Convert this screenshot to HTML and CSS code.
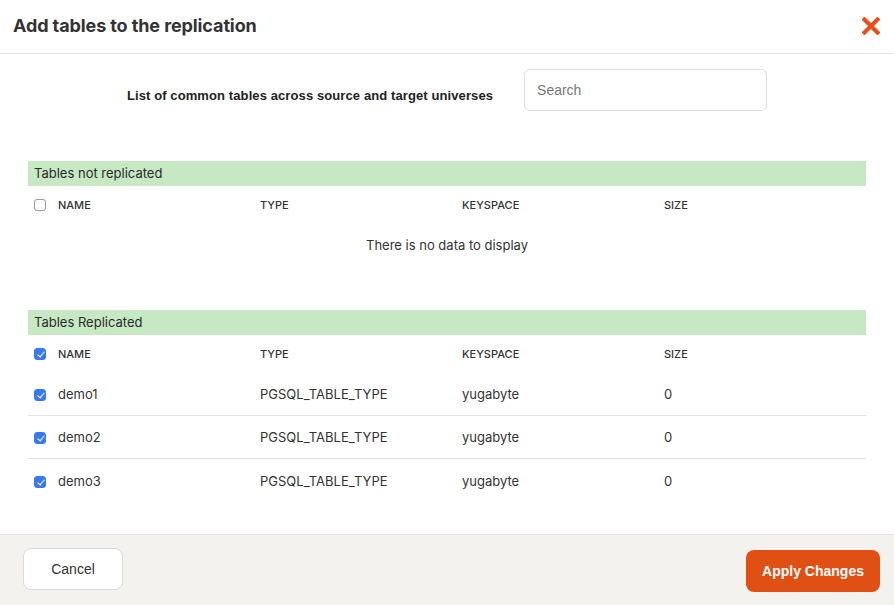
FILE: index.html
```html
<!DOCTYPE html>
<html>
<head>
<meta charset="utf-8">
<link rel="stylesheet" href="styles.css">
</head>
<body>
<div class="modal">
  <div class="modal-header">
    <h1 class="title">Add tables to the replication</h1>
    <button class="close" aria-label="Close">
      <svg width="18" height="18" viewBox="0 0 18 18"><path d="M2.5 2.5 L15.5 15.5 M15.5 2.5 L2.5 15.5" stroke="#e8501a" stroke-width="4.2" stroke-linecap="square" fill="none"/></svg>
    </button>
  </div>
  <div class="modal-body">
    <div class="intro">
      <span class="intro-text">List of common tables across source and target universes</span>
      <input class="search" type="text" placeholder="Search">
    </div>

    <div class="section">
      <div class="section-title">Tables not replicated</div>
      <div class="row head">
        <span class="cell cb"><span class="box"></span></span>
        <span class="cell">NAME</span>
        <span class="cell">TYPE</span>
        <span class="cell">KEYSPACE</span>
        <span class="cell">SIZE</span>
      </div>
      <div class="empty">There is no data to display</div>
    </div>

    <div class="section second">
      <div class="section-title">Tables Replicated</div>
      <div class="row head">
        <span class="cell cb"><span class="box checked"></span></span>
        <span class="cell">NAME</span>
        <span class="cell">TYPE</span>
        <span class="cell">KEYSPACE</span>
        <span class="cell">SIZE</span>
      </div>
      <div class="row data">
        <span class="cell cb"><span class="box checked"></span></span>
        <span class="cell">demo1</span>
        <span class="cell">PGSQL_TABLE_TYPE</span>
        <span class="cell">yugabyte</span>
        <span class="cell">0</span>
      </div>
      <div class="row data">
        <span class="cell cb"><span class="box checked"></span></span>
        <span class="cell">demo2</span>
        <span class="cell">PGSQL_TABLE_TYPE</span>
        <span class="cell">yugabyte</span>
        <span class="cell">0</span>
      </div>
      <div class="row data last">
        <span class="cell cb"><span class="box checked"></span></span>
        <span class="cell">demo3</span>
        <span class="cell">PGSQL_TABLE_TYPE</span>
        <span class="cell">yugabyte</span>
        <span class="cell">0</span>
      </div>
    </div>
  </div>
  <div class="modal-footer">
    <button class="btn cancel">Cancel</button>
    <button class="btn apply">Apply Changes</button>
  </div>
</div>
</body>
</html>
```

FILE: styles.css
```css
* { box-sizing: border-box; }
html, body { margin: 0; padding: 0; background: #fff; }
body { font-family: Inter, "Noto Sans", sans-serif; color: #333; }

.modal { width: 894px; height: 605px; display: flex; flex-direction: column; }

.modal-header {
  height: 54px;
  border-bottom: 1px solid #e3e3e3;
  display: flex;
  align-items: center;
  justify-content: space-between;
  padding: 0 14px 2px 13px;
}
.title { margin: 0; font-size: 18px; font-weight: 700; color: #333; letter-spacing: -0.1px; }
.close { background: none; border: 0; padding: 0; width: 18px; height: 18px; display: flex; cursor: pointer; }

.modal-body { flex: 1; padding: 15px 28px 0; }

.intro { display: flex; align-items: center; justify-content: center; gap: 31px; }
.intro-text { font-family: "Liberation Sans", Arial, sans-serif; font-weight: 700; font-size: 13px; letter-spacing: 0.1px; color: #222; margin-top: 10px; }
.search {
  width: 243px; height: 42px;
  border: 1px solid #dcdcdc; border-radius: 6px;
  padding: 0 12px;
  font-family: "Liberation Sans", Arial, sans-serif; font-size: 14px;
  outline: none;
}
.search::placeholder { color: #777; }

.section { margin-top: 50px; }
.section.second { margin-top: 44px; }
.section-title {
  background: #c6e8c3;
  height: 25px;
  line-height: 25px;
  padding-left: 6px;
  font-size: 13px;
  color: #2b2b2b;
}

.row { display: grid; grid-template-columns: 30px 202px 202px 202px 202px; align-items: center; }
.row.head { height: 38px; font-size: 11px; font-weight: 500; color: #333; }
.row.data { height: 43px; font-size: 13px; color: #333; border-bottom: 1px solid #e2e2e2; }
.row.data.last { border-bottom: 0; }
.cell.cb { display: flex; padding-left: 6px; }

.box { width: 12px; height: 12px; border: 1px solid #9a9a9a; border-radius: 3px; background: #fff; position: relative; }
.box.checked { background: #3a78f2; border-color: #3a78f2; }
.box.checked::after {
  content: "";
  position: absolute;
  left: 3.5px; top: 1px;
  width: 3px; height: 6px;
  border: solid #fff;
  border-width: 0 1.6px 1.6px 0;
  transform: rotate(40deg);
}
.row.data .box { margin-top: 2px; }

.empty { height: 42px; display: flex; align-items: center; justify-content: center; font-size: 13px; color: #333; }

.modal-footer {
  height: 71px;
  background: #f3f2ee;
  border-top: 1px solid #e4e4e4;
  display: flex;
  justify-content: space-between;
  align-items: flex-start;
  padding: 13px 14px 0 23px;
}
.btn { font-family: "Liberation Sans", Arial, sans-serif; font-size: 14px; height: 42px; border-radius: 8px; cursor: pointer; }
.cancel { width: 100px; background: #fff; border: 1px solid #dadada; color: #333; }
.apply { width: 134px; margin-top: 2px; background: #e04f14; border: 0; color: #fff; font-weight: 700; }
```
